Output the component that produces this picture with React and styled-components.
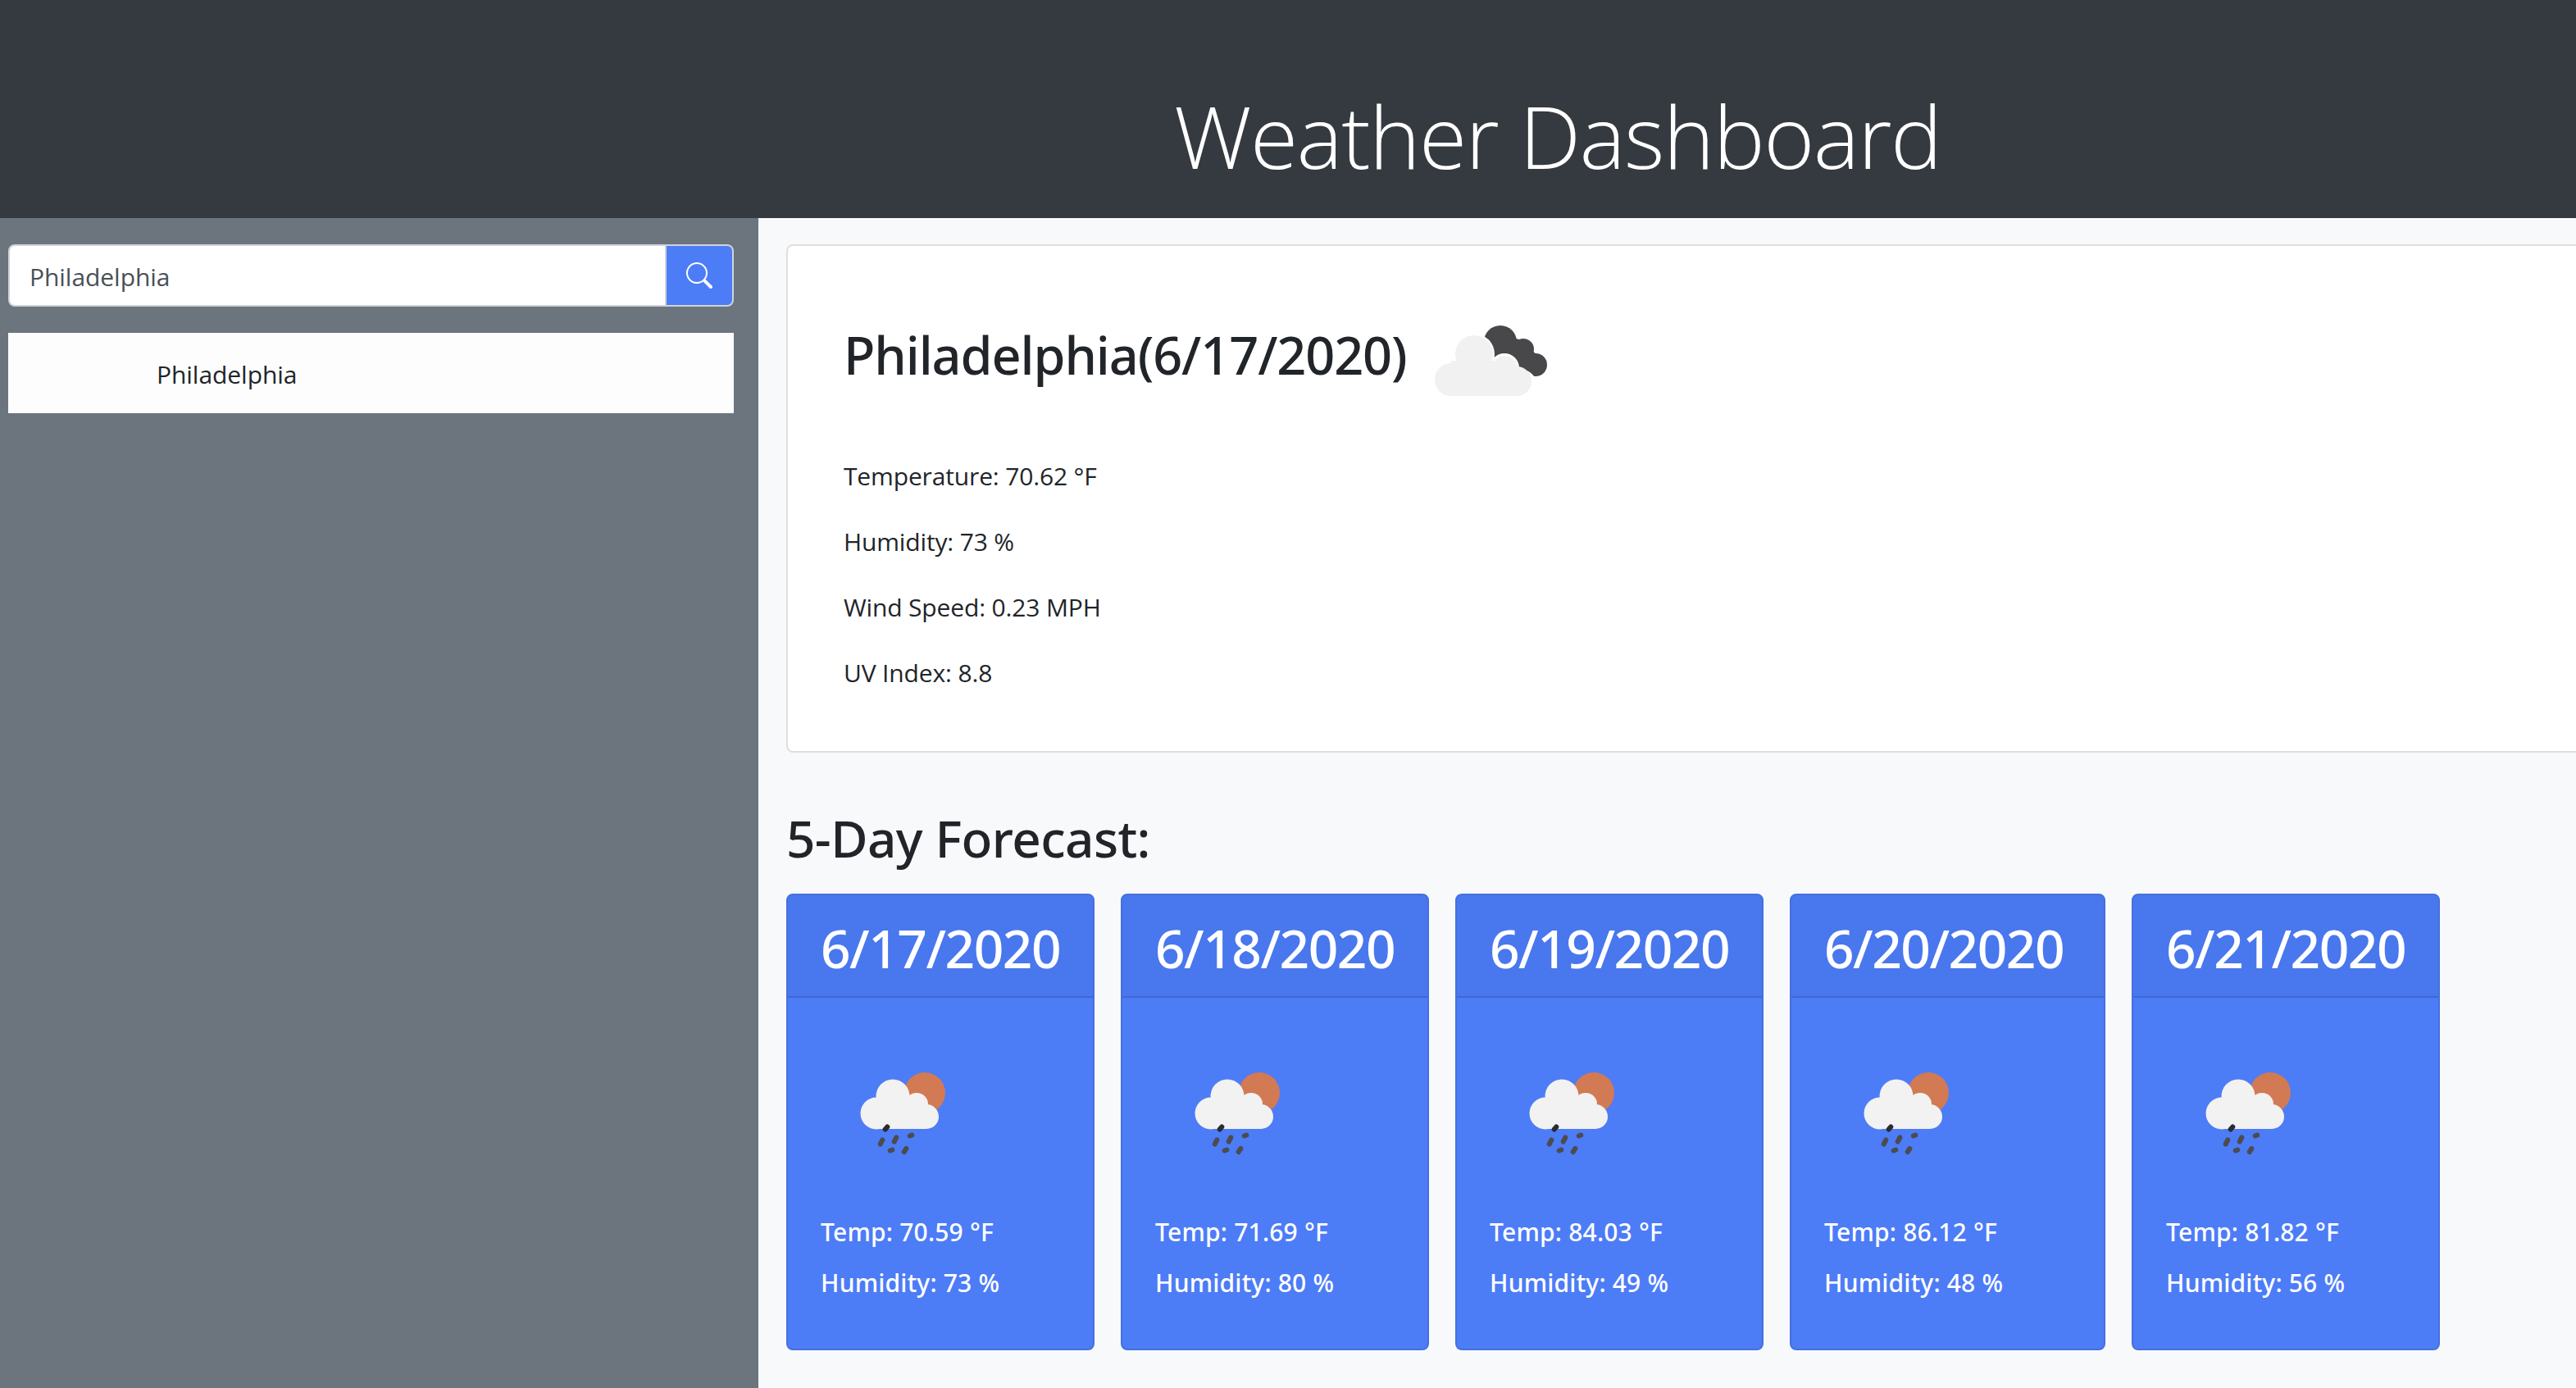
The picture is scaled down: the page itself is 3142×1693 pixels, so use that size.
import React from "react";
import styled, { createGlobalStyle } from "styled-components";
import { BsSearch } from "react-icons/bs";

const Global = createGlobalStyle`
  html, body { margin: 0; padding: 0; height: 100%; overflow: hidden; }
  body { font-family: "Open Sans", "Noto Sans", "Liberation Sans", sans-serif; color: #212529; background: #f8f9fa; }
  * { box-sizing: border-box; }
`;

const Page = styled.div`
  width: 3142px;
  height: 1693px;
  display: flex;
  flex-direction: column;
  overflow: hidden;
`;
const Header = styled.header`
  height: 266px;
  flex: none;
  background: #343a40;
  padding: 98px 0 0 1432px;
`;
const Title = styled.h1`
  margin: 0;
  font-size: 106px;
  line-height: 134px;
  font-weight: 300;
  color: #fff;
  letter-spacing: -1.6px;
  white-space: nowrap;
`;
const Body = styled.div`
  flex: 1;
  display: flex;
  min-height: 0;
`;
const Sidebar = styled.aside`
  width: 925px;
  flex: none;
  background: #6c757d;
  padding: 32px 30px 0 10px;
`;
const SearchGroup = styled.form`
  display: flex;
  height: 76px;
  margin: 0;
`;
const SearchInput = styled.input`
  flex: 1;
  min-width: 0;
  height: 76px;
  border: 2px solid #ced4da;
  border-right: 0;
  border-radius: 8px 0 0 8px;
  padding: 2px 24px 0;
  font: 400 30px/48px "Open Sans", sans-serif;
  letter-spacing: -0.05px;
  color: #495057;
  background: #fff;
  outline: none;
`;
const SearchButton = styled.button`
  width: 84px;
  flex: none;
  height: 76px;
  border: 2px solid #ced4da;
  border-radius: 0 8px 8px 0;
  background: #4d7cf7;
  color: #fff;
  display: flex;
  align-items: center;
  justify-content: center;
  padding: 0;
  font-size: 32px;
`;
const HistoryItem = styled.div`
  margin-top: 32px;
  height: 98px;
  background: #fdfdfe;
  padding: 2px 0 0 181px;
  display: flex;
  align-items: center;
  font-size: 30px;
  letter-spacing: -0.05px;
  color: #212529;
`;
const Main = styled.main`
  flex: 1;
  min-width: 0;
  padding: 32px 0 0 34px;
  background: #f8f9fa;
  overflow: hidden;
`;
const CurrentCard = styled.section`
  width: 2300px;
  height: 620px;
  background: #fff;
  border: 2px solid rgba(0, 0, 0, 0.125);
  border-radius: 8px;
  padding: 72px 0 0 68px;
`;
const CityRow = styled.div`
  display: flex;
  align-items: center;
  height: 126px;
  margin-bottom: 59px;
`;
const CityName = styled.h3`
  margin: 0 0 4px;
  font-family: "Noto Sans", "Open Sans", sans-serif;
  font-size: 63px;
  line-height: 84px;
  font-weight: 500;
  letter-spacing: -1.1px;
  color: #212529;
  white-space: nowrap;
`;
const MainIcon = styled.svg`
  width: 170px;
  height: 130px;
  margin-left: 12px;
  flex: none;
`;
const Stat = styled.p`
  margin: 0 0 32px;
  font-size: 30px;
  line-height: 48px;
  letter-spacing: -0.15px;
`;
const ForecastTitle = styled.h3`
  margin: 70px 0 0;
  font-family: "Noto Sans", "Open Sans", sans-serif;
  font-size: 62px;
  line-height: 68px;
  font-weight: 500;
  letter-spacing: -0.6px;
`;
const ForecastRow = styled.div`
  display: flex;
  gap: 32px;
  margin-top: 34px;
`;
const DayCard = styled.article`
  width: ${(p) => p.$width}px;
  height: 557px;
  flex: none;
  background: #4d7cf7;
  border: 2px solid #4570de;
  border-radius: 8px;
  color: #fff;
  overflow: hidden;
`;
const DayHeader = styled.div`
  height: 125px;
  background: rgba(0, 0, 0, 0.04);
  border-bottom: 2px solid rgba(0, 0, 0, 0.125);
  padding: 6px 0 0 40px;
  display: flex;
  align-items: center;
  font-family: "Noto Sans", "Open Sans", sans-serif;
  font-size: 64px;
  font-weight: 500;
  letter-spacing: -1.5px;
  white-space: nowrap;
`;
const DayBody = styled.div`
  padding: 73px 0 0 40px;
`;
const DayIcon = styled.svg`
  display: block;
  width: 160px;
  height: 130px;
  margin-left: 19px;
`;
const DayStats = styled.div`
  margin-top: 59px;
  display: flex;
  flex-direction: column;
  gap: 14px;
`;
const DayStat = styled.div`
  font-family: "Noto Sans", "Open Sans", sans-serif;
  font-size: 30px;
  line-height: 48px;
  font-weight: 500;
  letter-spacing: 0.2px;
  white-space: nowrap;
`;

const Drop = ({ x, y, len = 5, fill = "#4c4c4e" }) => (
  <line
    x1={x + 1.3}
    y1={y - len / 2}
    x2={x - 1.3}
    y2={y + len / 2}
    stroke={fill}
    strokeWidth="6"
    strokeLinecap="round"
  />
);

const RainIcon = () => (
  <DayIcon viewBox="0 0 160 130" aria-hidden="true">
    <circle cx="108" cy="43" r="25" fill="#d27a54" />
    <g fill="#f2f2f2">
      <circle cx="49" cy="68" r="19.5" />
      <circle cx="69" cy="47" r="20.5" />
      <circle cx="98" cy="57" r="14" />
      <circle cx="110" cy="72" r="15" />
      <rect x="48" y="56" width="62" height="31" />
    </g>
    <Drop x={61} y={86} len={3} fill="#2c2c2e" />
    <Drop x={55} y={103} len={5} />
    <Drop x={72} y={100} len={5} />
    <Drop x={91} y={95} len={1} />
    <Drop x={67} y={113} len={1} />
    <Drop x={84} y={113} len={4} />
  </DayIcon>
);

const CloudIcon = () => (
  <MainIcon viewBox="0 0 170 130" aria-hidden="true">
    <g fill="#48484a">
      <circle cx="102" cy="47" r="20" />
      <circle cx="130" cy="56" r="13" />
      <circle cx="145" cy="75" r="14" />
      <polygon points="90,35 125,44 155,70 140,89 100,60" />
    </g>
    <g fill="#fff">
      <circle cx="70" cy="62" r="25" />
      <circle cx="107" cy="79" r="18" />
      <circle cx="128" cy="99" r="18" />
    </g>
    <g fill="#f1f1f1">
      <circle cx="70" cy="62" r="23" />
      <circle cx="42" cy="93" r="20" />
      <circle cx="107" cy="79" r="15" />
      <circle cx="122" cy="95" r="18" />
      <rect x="42" y="70" width="80" height="43" />
    </g>
  </MainIcon>
);

const days = [
  { date: "6/17/2020", temp: "70.59", hum: 73, width: 376 },
  { date: "6/18/2020", temp: "71.69", hum: 80, width: 376 },
  { date: "6/19/2020", temp: "84.03", hum: 49, width: 376 },
  { date: "6/20/2020", temp: "86.12", hum: 48, width: 385 },
  { date: "6/21/2020", temp: "81.82", hum: 56, width: 376 },
];

export default function App() {
  return (
    <Page>
      <Global />
      <Header>
        <Title>Weather Dashboard</Title>
      </Header>
      <Body>
        <Sidebar>
          <SearchGroup onSubmit={(e) => e.preventDefault()}>
            <SearchInput defaultValue="Philadelphia" />
            <SearchButton type="button" aria-label="Search">
              <BsSearch />
            </SearchButton>
          </SearchGroup>
          <HistoryItem>Philadelphia</HistoryItem>
        </Sidebar>
        <Main>
          <CurrentCard>
            <CityRow>
              <CityName>Philadelphia(6/17/2020)</CityName>
              <CloudIcon />
            </CityRow>
            <Stat>Temperature: 70.62 °F</Stat>
            <Stat>Humidity: 73 %</Stat>
            <Stat>Wind Speed: 0.23 MPH</Stat>
            <Stat>UV Index: 8.8</Stat>
          </CurrentCard>
          <ForecastTitle>5-Day Forecast:</ForecastTitle>
          <ForecastRow>
            {days.map((d) => (
              <DayCard key={d.date} $width={d.width}>
                <DayHeader>{d.date}</DayHeader>
                <DayBody>
                  <RainIcon />
                  <DayStats>
                    <DayStat>Temp: {d.temp} °F</DayStat>
                    <DayStat>Humidity: {d.hum} %</DayStat>
                  </DayStats>
                </DayBody>
              </DayCard>
            ))}
          </ForecastRow>
        </Main>
      </Body>
    </Page>
  );
}
